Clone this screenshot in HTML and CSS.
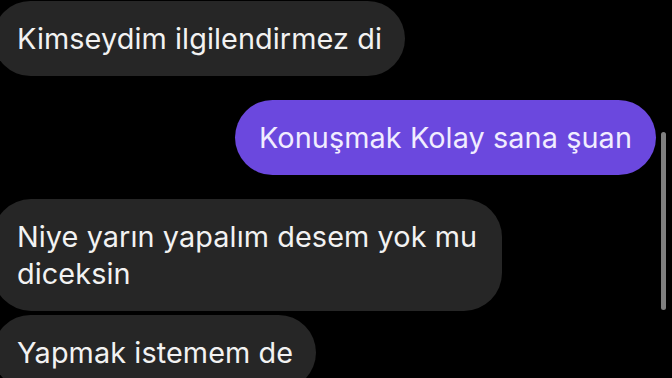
FILE: index.html
```html
<!DOCTYPE html>
<html lang="tr">
<head>
  <meta charset="UTF-8">
  <meta name="viewport" content="width=device-width, initial-scale=1.0">
  <title>Sohbet</title>
  <link rel="stylesheet" href="styles.css">
</head>
<body>
  <div id="thread">
    <div class="msg in">Kimseydim ilgilendirmez di</div>
    <div class="msg out">Konuşmak Kolay sana şuan</div>
    <div class="msg in">Niye yarın yapalım desem yok mu diceksin</div>
    <div class="msg in next">Yapmak istemem de</div>
  </div>
  <div class="scrollbar"></div>
</body>
</html>
```

FILE: styles.css
```css
/* Basic reset */
* { margin: 0; padding: 0; box-sizing: border-box; }
body, html {
  height: 100%;
  background: #000;
  overflow: hidden;
  font-family: Inter, 'Liberation Sans', sans-serif;
  position: relative;
}

/* Message list */
#thread {
  display: flex; flex-direction: column;
  padding-top: 1px; gap: 24px;
}
.msg {
  max-width: 509px;
  padding: 19px 23px 19px 24px;
  border-radius: 38px;
  font-size: 28.8px; line-height: 37px;
  letter-spacing: 0.1px;
  color: #f2f2f2;
}
.msg.in { align-self: flex-start; margin-left: -7px; background: #262626; }
.msg.out { align-self: flex-end; margin-right: 16px; background: #6b48de; color: #f1edff; padding: 19px 24px; }
.msg.next { margin-top: -20px; }

/* Overlay scrollbar */
.scrollbar {
  position: absolute; top: 132px; right: 6px;
  width: 5px; height: 178px;
  border-radius: 3px; background: #7f7f7f;
}
```
